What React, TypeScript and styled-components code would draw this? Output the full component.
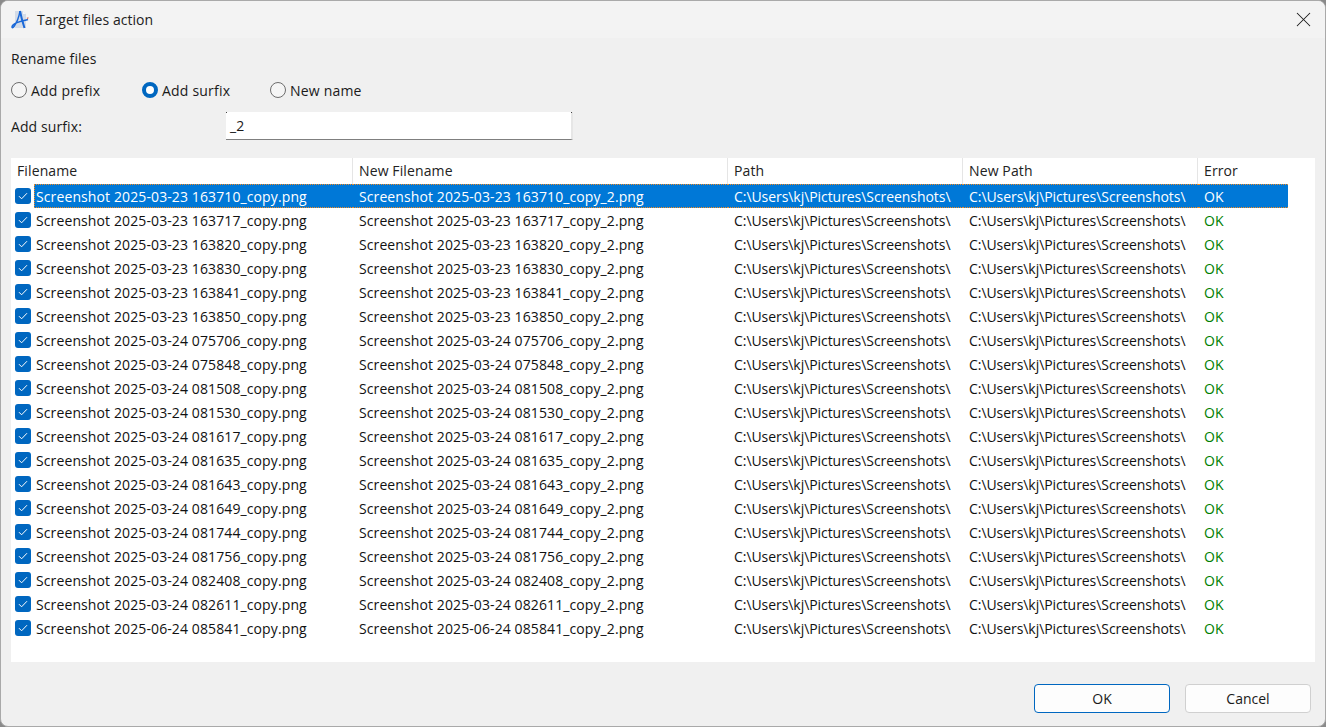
import { createGlobalStyle, css, styled } from 'styled-components'
import { X } from 'lucide-react'

const GlobalStyle = createGlobalStyle`
  html, body {
    margin: 0;
    padding: 0;
    background: #8a8a8a;
  }
  body {
    font-family: 'Open Sans', 'Noto Sans', sans-serif;
    font-size: 14px;
    color: #1a1a1a;
  }
`

const Window = styled.div`
  width: 1326px;
  height: 727px;
  box-sizing: border-box;
  border: 1px solid #a9a9a9;
  border-radius: 8px;
  background: #f0f0f0;
  overflow: hidden;
  display: flex;
  flex-direction: column;
`

const TitleBar = styled.div`
  height: 37px;
  flex: none;
  background: #f3f3f3;
  display: flex;
  align-items: center;
  padding: 0 9px 0 10px;
  gap: 8px;
`

const Title = styled.span`
  flex: 1;
  font-size: 14px;
  letter-spacing: 0.05px;
  color: #222;
`

const Content = styled.div`
  flex: 1;
  display: flex;
  flex-direction: column;
  padding: 0 10px;
`

const SectionLabel = styled.div`
  height: 20px;
  margin-top: 11px;
  line-height: 20px;
  letter-spacing: 0.17px;
`

const RadioRow = styled.div`
  display: flex;
  align-items: center;
  height: 20px;
  margin-top: 11px;
  letter-spacing: 0.2px;
`

const RadioItem = styled.label<{ $width: number }>`
  width: ${p => p.$width}px;
  display: flex;
  align-items: center;
  gap: 4px;
`

const RadioDot = styled.span<{ $on?: boolean }>`
  width: 16px;
  height: 16px;
  box-sizing: border-box;
  border-radius: 50%;
  background: ${p => (p.$on ? '#fff' : '#f5f5f5')};
  border: ${p => (p.$on ? '4px solid #0067c0' : '1px solid #6d6d6d')};
`

const FieldRow = styled.div`
  display: flex;
  align-items: center;
  margin-top: 12px;
  height: 28px;
`

const FieldLabel = styled.span`
  width: 215px;
  letter-spacing: 0.1px;
`

const TextField = styled.div`
  position: relative;
  width: 347px;
  height: 28px;
  box-sizing: border-box;
  background: #fff;
  padding-left: 4px;
  line-height: 28px;
  border-bottom: 1px solid #7f7f7f;
  border-right: 2px solid #e6e6e6;

  &::before,
  &::after {
    content: '';
    position: absolute;
    top: 0;
    width: 1px;
    height: 1px;
    background: #444;
  }
  &::before {
    left: 0;
  }
  &::after {
    right: -1px;
  }
`

const Table = styled.div`
  margin-top: 18px;
  width: 1304px;
  height: 504px;
  background: #fff;
  display: flex;
  flex-direction: column;
`

const gridColumns = '342px 375px 235px 235px 90px'

const HeaderRow = styled.div`
  display: grid;
  grid-template-columns: ${gridColumns};
  height: 26px;
`

const HeaderCell = styled.div<{ $last?: boolean }>`
  padding-left: 6px;
  line-height: 26px;
  letter-spacing: 0.12px;
  color: #222;
  border-right: ${p => (p.$last ? 'none' : '1px solid #e5e5e5')};
`

const Row = styled.div<{ $selected?: boolean }>`
  display: grid;
  grid-template-columns: ${gridColumns};
  height: 24px;
  line-height: 26px;
  color: ${p => (p.$selected ? '#fff' : '#111')};
`

const selectedCell = css`
  box-sizing: border-box;
  height: 24px;
  line-height: 24px;
  background: #0078d7;
  border-top: 1px dotted #f08a24;
  border-bottom: 1px dotted #f08a24;
`

const NameCell = styled.div`
  display: flex;
  align-items: center;
  padding-left: 4px;
  gap: 3px;
`

const NameText = styled.span<{ $selected?: boolean }>`
  flex: 1;
  height: 24px;
  padding-left: 2px;
  letter-spacing: 0.11px;
  ${p =>
    p.$selected &&
    css`
      ${selectedCell}
      padding-left: 1px;
      border-left: 1px dotted #f08a24;
    `}
`

const Cell = styled.div<{ $selected?: boolean; $spacing: number }>`
  padding-left: 6px;
  white-space: nowrap;
  overflow: hidden;
  letter-spacing: ${p => p.$spacing}px;
  ${p => p.$selected && selectedCell}
`

const StatusCell = styled(Cell)`
  color: ${p => (p.$selected ? '#fff' : '#008000')};
`

const CheckBox = styled.span`
  width: 16px;
  height: 16px;
  flex: none;
  border-radius: 3px;
  background: #0067c0;
  display: flex;
  align-items: center;
  justify-content: center;
`

const Footer = styled.div`
  display: flex;
  justify-content: flex-end;
  gap: 15px;
  margin-top: 22px;
  padding-right: 4px;
`

const Button = styled.button<{ $primary?: boolean; $width: number }>`
  width: ${p => p.$width}px;
  height: 29px;
  box-sizing: border-box;
  background: #fdfdfd;
  border: 1px solid ${p => (p.$primary ? '#0067c0' : '#d0d0d0')};
  border-radius: 4px;
  font: inherit;
  color: #1a1a1a;
  padding: 0;
`

const files = [
  '2025-03-23 163710',
  '2025-03-23 163717',
  '2025-03-23 163820',
  '2025-03-23 163830',
  '2025-03-23 163841',
  '2025-03-23 163850',
  '2025-03-24 075706',
  '2025-03-24 075848',
  '2025-03-24 081508',
  '2025-03-24 081530',
  '2025-03-24 081617',
  '2025-03-24 081635',
  '2025-03-24 081643',
  '2025-03-24 081649',
  '2025-03-24 081744',
  '2025-03-24 081756',
  '2025-03-24 082408',
  '2025-03-24 082611',
  '2025-06-24 085841',
]

const folder = 'C:\\Users\\kj\\Pictures\\Screenshots\\'

function AppIcon() {
  return (
    <svg width="18" height="20" viewBox="0 0 18 20" fill="none">
      <path d="M4 1h8l3 3v14H4z" fill="#d3dbe7" />
      <path d="M12 1l3 3h-3z" fill="#f4f6f9" />
      <path d="M9 1 C8 7 5.5 13 3 16.5 C1.2 19 0.2 17 2 15 C5 12 12 11 17 9.5" stroke="#1a68d8" strokeWidth="1.5" />
      <path d="M9 1 C10 6 11.5 12 13.5 18" stroke="#1a68d8" strokeWidth="2" />
      <path d="M15.5 8l2-1-.5 2.5z" fill="#d9705c" />
    </svg>
  )
}

function Check() {
  return (
    <svg width="10" height="8" viewBox="0 0 10 8" fill="none">
      <path d="M1 4.2 L3.6 6.8 L9 1.2" stroke="#fff" strokeWidth="1" />
    </svg>
  )
}

export default function App() {
  return (
    <Window>
      <GlobalStyle />
      <TitleBar>
        <AppIcon />
        <Title>Target files action</Title>
        <X size={25} strokeWidth={1} color="#1a1a1a" />
      </TitleBar>
      <Content>
        <SectionLabel>Rename files</SectionLabel>
        <RadioRow>
          <RadioItem $width={131}>
            <RadioDot />
            Add prefix
          </RadioItem>
          <RadioItem $width={128}>
            <RadioDot $on />
            Add surfix
          </RadioItem>
          <RadioItem $width={120}>
            <RadioDot />
            New name
          </RadioItem>
        </RadioRow>
        <FieldRow>
          <FieldLabel>Add surfix:</FieldLabel>
          <TextField>_2</TextField>
        </FieldRow>
        <Table>
          <HeaderRow>
            <HeaderCell>Filename</HeaderCell>
            <HeaderCell>New Filename</HeaderCell>
            <HeaderCell>Path</HeaderCell>
            <HeaderCell>New Path</HeaderCell>
            <HeaderCell $last>Error</HeaderCell>
          </HeaderRow>
          {files.map((stamp, i) => {
            const selected = i === 0
            return (
              <Row key={stamp} $selected={selected}>
                <NameCell>
                  <CheckBox>
                    <Check />
                  </CheckBox>
                  <NameText $selected={selected}>Screenshot {stamp}_copy.png</NameText>
                </NameCell>
                <Cell $selected={selected} $spacing={0.1}>Screenshot {stamp}_copy_2.png</Cell>
                <Cell $selected={selected} $spacing={-0.06}>{folder}</Cell>
                <Cell $selected={selected} $spacing={-0.06}>{folder}</Cell>
                <StatusCell $selected={selected} $spacing={0}>OK</StatusCell>
              </Row>
            )
          })}
        </Table>
        <Footer>
          <Button $primary $width={136}>OK</Button>
          <Button $width={126}>Cancel</Button>
        </Footer>
      </Content>
    </Window>
  )
}
